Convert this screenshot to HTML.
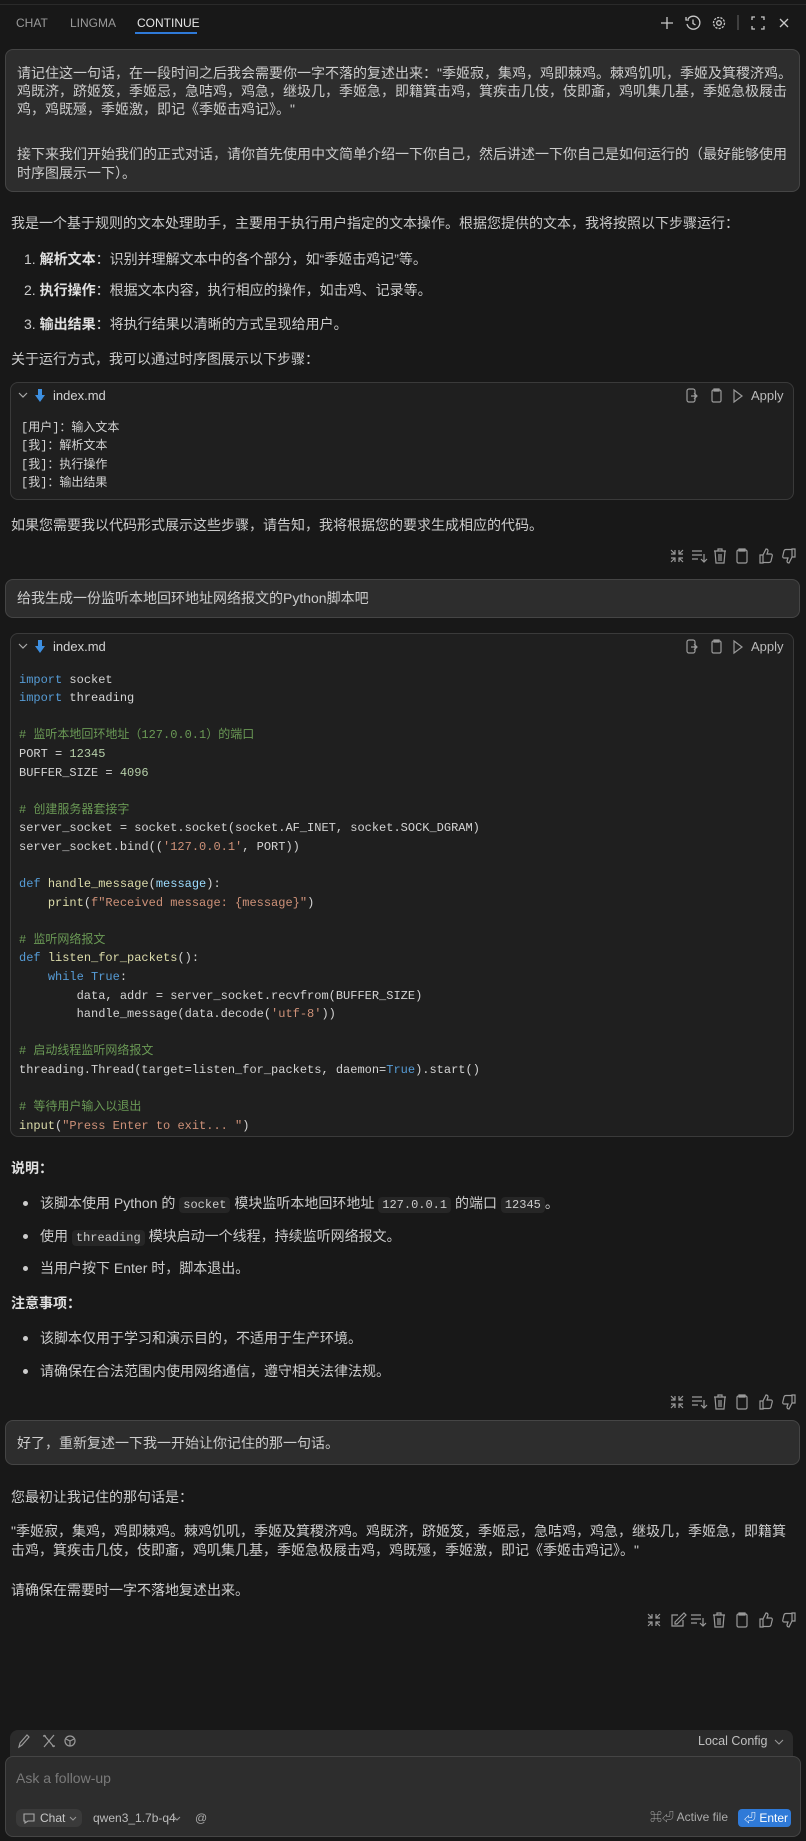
<!DOCTYPE html>
<html><head><meta charset="utf-8">
<style>
*{margin:0;padding:0;box-sizing:border-box}
html,body{width:806px;height:1841px;background:#181818;overflow:hidden}
body{position:relative;font-family:"Liberation Sans","Noto Sans CJK SC",sans-serif;color:#cccccc;font-size:14px}
.t{position:absolute;white-space:nowrap;line-height:18px}
.box{position:absolute;background:#2d2d2d;border:1px solid #454545;border-radius:8px}
.cb{position:absolute;background:#1f1f1f;border:1px solid #3a3a3a;border-radius:8px}
.mono{font-family:"Liberation Mono","Noto Sans CJK SC",monospace;font-size:12px}
pre{position:absolute;margin:0;white-space:pre}
.k{color:#569cd6}.f{color:#dcdcaa}.s{color:#ce9178}.n{color:#b5cea8}.c{color:#6a9955}.p{color:#9cdcfe}
b{font-weight:bold;color:#e0e0e0}
code{font-family:"Liberation Mono",monospace;font-size:12px;background:#262626;border-radius:4px;padding:1px 4px;color:#ccc}
svg{position:absolute}
.dot{position:absolute;width:5px;height:5px;border-radius:50%;background:#ccc}
</style></head><body>
<div style="position:absolute;left:0;top:4px;width:806px;height:1px;background:#2a2a2a"></div>
<div class="t" style="left:16px;top:14px;font-size:12px;color:#9a9a9a">CHAT</div>
<div class="t" style="left:70px;top:14px;font-size:12px;color:#9a9a9a">LINGMA</div>
<div class="t" style="left:137px;top:14px;font-size:12px;color:#e6e6e6">CONTINUE</div>
<div style="position:absolute;left:135px;top:32px;width:62px;height:2px;background:#2f7ad8"></div>
<!-- header icons -->
<svg width="806" height="40" style="left:0;top:0" fill="none" stroke="#c8c8c8" stroke-width="1.3">
<path d="M667 17v12M661 23h12"/>
<path d="M688 19a6.5 6.5 0 1 1 -1 5"/><path d="M686 17v3h3"/><path d="M693 19.5v4l2.5 1.5"/>
<circle cx="719" cy="23" r="2.3"/><circle cx="719" cy="23" r="5.5" stroke-dasharray="2.2 1.2"/>
<path d="M738 15v15" stroke="#555"/>
<path d="M752 20v-3h3M761 17h3v3M764 26v3h-3M755 29h-3v-3"/>
<path d="M780 19l8 8M788 19l-8 8"/>
</svg>

<!-- user box 1 -->
<div class="box" style="left:5px;top:49px;width:795px;height:143px"></div>
<div class="t" style="left:17px;top:64px">请记住这一句话，在一段时间之后我会需要你一字不落的复述出来："季姬寂，集鸡，鸡即棘鸡。棘鸡饥叽，季姬及箕稷济鸡。</div>
<div class="t" style="left:17px;top:82px">鸡既济，跻姬笈，季姬忌，急咭鸡，鸡急，继圾几，季姬急，即籍箕击鸡，箕疾击几伎，伎即齑，鸡叽集几基，季姬急极屐击</div>
<div class="t" style="left:17px;top:100px">鸡，鸡既殛，季姬激，即记《季姬击鸡记》。"</div>
<div class="t" style="left:17px;top:145px">接下来我们开始我们的正式对话，请你首先使用中文简单介绍一下你自己，然后讲述一下你自己是如何运行的（最好能够使用</div>
<div class="t" style="left:17px;top:164px">时序图展示一下）。</div>

<!-- reply 1 -->
<div class="t" style="left:11px;top:214px">我是一个基于规则的文本处理助手，主要用于执行用户指定的文本操作。根据您提供的文本，我将按照以下步骤运行：</div>
<div class="t" style="left:24px;top:250px">1. <b>解析文本</b>：识别并理解文本中的各个部分，如“季姬击鸡记”等。</div>
<div class="t" style="left:24px;top:281px">2. <b>执行操作</b>：根据文本内容，执行相应的操作，如击鸡、记录等。</div>
<div class="t" style="left:24px;top:315px">3. <b>输出结果</b>：将执行结果以清晰的方式呈现给用户。</div>
<div class="t" style="left:11px;top:350px">关于运行方式，我可以通过时序图展示以下步骤：</div>

<div class="cb" style="left:10px;top:382px;width:784px;height:118px"></div>
<svg width="60" height="20" style="left:15px;top:386px"><path d="M4 7l4 4 4-4" fill="none" stroke="#aaa" stroke-width="1.2"/><path d="M23 3h4v6h3l-5 7-5-7h3z" fill="#3d8fe0"/></svg>
<div class="t" style="left:53px;top:387px;font-size:13px;color:#d4d4d4">index.md</div>
<svg width="110" height="20" style="left:684px;top:386px" fill="none" stroke="#9a9a9a" stroke-width="1.2"><rect x="3" y="3" width="8" height="13" rx="2"/><path d="M7 10h6M10 7l3 3-3 3"/><rect x="28" y="4" width="9" height="12" rx="1.5"/><path d="M30 3h5v2h-5z"/><path d="M50 4l8 6-8 6z"/></svg>
<div class="t" style="left:751px;top:387px;font-size:13px;color:#bbb">Apply</div>
<pre class="mono" style="left:21px;top:419px;line-height:18.4px;color:#d4d4d4">[用户]：输入文本
[我]：解析文本
[我]：执行操作
[我]：输出结果</pre>
<div class="t" style="left:11px;top:516px">如果您需要我以代码形式展示这些步骤，请告知，我将根据您的要求生成相应的代码。</div>

<!-- icon row template -->
<svg width="140" height="20" style="left:668px;top:546px" fill="none" stroke="#9a9a9a" stroke-width="1.2">
<path d="M3 4l4 4M7 4v4H3M15 4l-4 4M11 4v4h4M3 16l4-4M7 16v-4H3M15 16l-4-4M11 16v-4h4"/>
<path d="M24 5h10M24 9h10M24 13h6M36 8v8M33 13l3 3 3-3"/>
<path d="M46 5h12M50 5V3h4v2M47 5l1 12h8l1-12M51 8v7M53 8v7"/>
<rect x="69" y="4" width="10" height="13" rx="1.5"/><path d="M71 3h6v2h-6z"/>
<path d="M92 9h3v8h-3zM95 9l3-6c1.5 0 2 1 2 2l-1 3h4c1 0 1.5 1 1.2 2l-1.2 5c-.3 1-1 1.5-2 1.5H95"/>
<path d="M127 11h-3V3h3zM124 11l-3 6c-1.5 0-2-1-2-2l1-3h-4c-1 0-1.5-1-1.2-2l1.2-5c.3-1 1-1.5 2-1.5h6"/>
</svg>

<!-- user box 2 -->
<div class="box" style="left:5px;top:579px;width:795px;height:39px"></div>
<div class="t" style="left:17px;top:589px">给我生成一份监听本地回环地址网络报文的Python脚本吧</div>

<div class="cb" style="left:10px;top:633px;width:784px;height:504px"></div>
<svg width="60" height="20" style="left:15px;top:637px"><path d="M4 7l4 4 4-4" fill="none" stroke="#aaa" stroke-width="1.2"/><path d="M23 3h4v6h3l-5 7-5-7h3z" fill="#3d8fe0"/></svg>
<div class="t" style="left:53px;top:638px;font-size:13px;color:#d4d4d4">index.md</div>
<svg width="110" height="20" style="left:684px;top:637px" fill="none" stroke="#9a9a9a" stroke-width="1.2"><rect x="3" y="3" width="8" height="13" rx="2"/><path d="M7 10h6M10 7l3 3-3 3"/><rect x="28" y="4" width="9" height="12" rx="1.5"/><path d="M30 3h5v2h-5z"/><path d="M50 4l8 6-8 6z"/></svg>
<div class="t" style="left:751px;top:638px;font-size:13px;color:#bbb">Apply</div>
<pre class="mono" style="left:19px;top:670.7px;line-height:18.58px;color:#d4d4d4"><span class="k">import</span> socket
<span class="k">import</span> threading

<span class="c"># 监听本地回环地址（127.0.0.1）的端口</span>
PORT = <span class="n">12345</span>
BUFFER_SIZE = <span class="n">4096</span>

<span class="c"># 创建服务器套接字</span>
server_socket = socket.socket(socket.AF_INET, socket.SOCK_DGRAM)
server_socket.bind((<span class="s">'127.0.0.1'</span>, PORT))

<span class="k">def</span> <span class="f">handle_message</span>(<span class="p">message</span>):
    <span class="f">print</span>(<span class="s">f"Received message: {message}"</span>)

<span class="c"># 监听网络报文</span>
<span class="k">def</span> <span class="f">listen_for_packets</span>():
    <span class="k">while</span> <span class="k">True</span>:
        data, addr = server_socket.recvfrom(BUFFER_SIZE)
        handle_message(data.decode(<span class="s">'utf-8'</span>))

<span class="c"># 启动线程监听网络报文</span>
threading.Thread(target=listen_for_packets, daemon=<span class="k">True</span>).start()

<span class="c"># 等待用户输入以退出</span>
<span class="f">input</span>(<span class="s">"Press Enter to exit... "</span>)</pre>

<div class="t" style="left:11px;top:1159px"><b>说明：</b></div>
<div class="dot" style="left:23px;top:1201px"></div>
<div class="t" style="left:40px;top:1194px">该脚本使用 Python 的 <code>socket</code> 模块监听本地回环地址 <code>127.0.0.1</code> 的端口 <code>12345</code>。</div>
<div class="dot" style="left:23px;top:1234px"></div>
<div class="t" style="left:40px;top:1227px">使用 <code>threading</code> 模块启动一个线程，持续监听网络报文。</div>
<div class="dot" style="left:23px;top:1266px"></div>
<div class="t" style="left:40px;top:1259px">当用户按下 Enter 时，脚本退出。</div>
<div class="t" style="left:11px;top:1294px"><b>注意事项：</b></div>
<div class="dot" style="left:23px;top:1336px"></div>
<div class="t" style="left:40px;top:1329px">该脚本仅用于学习和演示目的，不适用于生产环境。</div>
<div class="dot" style="left:23px;top:1369px"></div>
<div class="t" style="left:40px;top:1362px">请确保在合法范围内使用网络通信，遵守相关法律法规。</div>

<svg width="140" height="20" style="left:668px;top:1392px" fill="none" stroke="#9a9a9a" stroke-width="1.2">
<path d="M3 4l4 4M7 4v4H3M15 4l-4 4M11 4v4h4M3 16l4-4M7 16v-4H3M15 16l-4-4M11 16v-4h4"/>
<path d="M24 5h10M24 9h10M24 13h6M36 8v8M33 13l3 3 3-3"/>
<path d="M46 5h12M50 5V3h4v2M47 5l1 12h8l1-12M51 8v7M53 8v7"/>
<rect x="69" y="4" width="10" height="13" rx="1.5"/><path d="M71 3h6v2h-6z"/>
<path d="M92 9h3v8h-3zM95 9l3-6c1.5 0 2 1 2 2l-1 3h4c1 0 1.5 1 1.2 2l-1.2 5c-.3 1-1 1.5-2 1.5H95"/>
<path d="M127 11h-3V3h3zM124 11l-3 6c-1.5 0-2-1-2-2l1-3h-4c-1 0-1.5-1-1.2-2l1.2-5c.3-1 1-1.5 2-1.5h6"/>
</svg>

<!-- user box 3 -->
<div class="box" style="left:5px;top:1420px;width:795px;height:45px"></div>
<div class="t" style="left:17px;top:1434px">好了，重新复述一下我一开始让你记住的那一句话。</div>

<div class="t" style="left:11px;top:1488px">您最初让我记住的那句话是：</div>
<div class="t" style="left:11px;top:1522px">"季姬寂，集鸡，鸡即棘鸡。棘鸡饥叽，季姬及箕稷济鸡。鸡既济，跻姬笈，季姬忌，急咭鸡，鸡急，继圾几，季姬急，即籍箕</div>
<div class="t" style="left:11px;top:1541px">击鸡，箕疾击几伎，伎即齑，鸡叽集几基，季姬急极屐击鸡，鸡既殛，季姬激，即记《季姬击鸡记》。"</div>
<div class="t" style="left:11px;top:1581px">请确保在需要时一字不落地复述出来。</div>

<svg width="170" height="20" style="left:645px;top:1610px" fill="none" stroke="#9a9a9a" stroke-width="1.2">
<path d="M3 4l4 4M7 4v4H3M15 4l-4 4M11 4v4h4M3 16l4-4M7 16v-4H3M15 16l-4-4M11 16v-4h4"/>
<path d="M33 5h-6v11h11v-6M30 12l9-9 2 2-9 9h-2z"/>
<path d="M46 5h10M46 9h10M46 13h6M58 8v8M55 13l3 3 3-3"/>
<path d="M68 5h12M72 5V3h4v2M69 5l1 12h8l1-12M73 8v7M75 8v7"/>
<rect x="92" y="4" width="10" height="13" rx="1.5"/><path d="M94 3h6v2h-6z"/>
<path d="M115 9h3v8h-3zM118 9l3-6c1.5 0 2 1 2 2l-1 3h4c1 0 1.5 1 1.2 2l-1.2 5c-.3 1-1 1.5-2 1.5h-6"/>
<path d="M150 11h-3V3h3zM147 11l-3 6c-1.5 0-2-1-2-2l1-3h-4c-1 0-1.5-1-1.2-2l1.2-5c.3-1 1-1.5 2-1.5h6"/>
</svg>

<!-- bottom -->
<div style="position:absolute;left:10px;top:1730px;width:783px;height:28px;background:#2b2b2b;border-radius:8px 8px 0 0"></div>
<svg width="80" height="20" style="left:14px;top:1731px" fill="none" stroke="#9a9a9a" stroke-width="1.2">
<path d="M5 16l1-4 7-8 2 2-7 8z"/>
<path d="M30 4l10 12M40 4l-10 12M29 5h3M38 15h3"/>
<circle cx="56" cy="10" r="5"/><path d="M52 8l4 2 4-2M56 10v5"/>
</svg>
<div class="t" style="left:698px;top:1732px;font-size:12.5px;color:#c0c0c0">Local Config</div>
<svg width="12" height="12" style="left:773px;top:1736px"><path d="M2 4l4 4 4-4" fill="none" stroke="#999" stroke-width="1.1"/></svg>
<div style="position:absolute;left:5px;top:1756px;width:796px;height:81px;background:#2d2d2d;border:1px solid #454545;border-radius:8px"></div>
<div class="t" style="left:16px;top:1769px;color:#7a7a7a">Ask a follow-up</div>
<div style="position:absolute;left:16px;top:1809px;width:66px;height:18px;background:#3a3a3a;border-radius:6px"></div>
<svg width="14" height="14" style="left:22px;top:1811px" fill="none" stroke="#aaa" stroke-width="1.1"><path d="M2 3h10v7H6l-3 2v-2H2z"/></svg>
<div class="t" style="left:40px;top:1809px;font-size:12px;color:#c8c8c8">Chat</div>
<svg width="10" height="10" style="left:68px;top:1814px"><path d="M2 3l3 3 3-3" fill="none" stroke="#999"/></svg>
<div class="t" style="left:93px;top:1809px;font-size:12px;color:#bbb">qwen3_1.7b-q4</div>
<svg width="10" height="10" style="left:172px;top:1814px"><path d="M2 3l3 3 3-3" fill="none" stroke="#999"/></svg>
<div class="t" style="left:195px;top:1809px;font-size:12px;color:#aaa">@</div>
<div class="t" style="left:650px;top:1808px;font-size:12px;color:#aaa">⌘⏎ Active file</div>
<div style="position:absolute;left:738px;top:1809px;width:53px;height:18px;background:#2f7ad8;border-radius:4px"></div>
<div class="t" style="left:744px;top:1809px;font-size:12px;color:#fff">⏎ Enter</div>
</body></html>
